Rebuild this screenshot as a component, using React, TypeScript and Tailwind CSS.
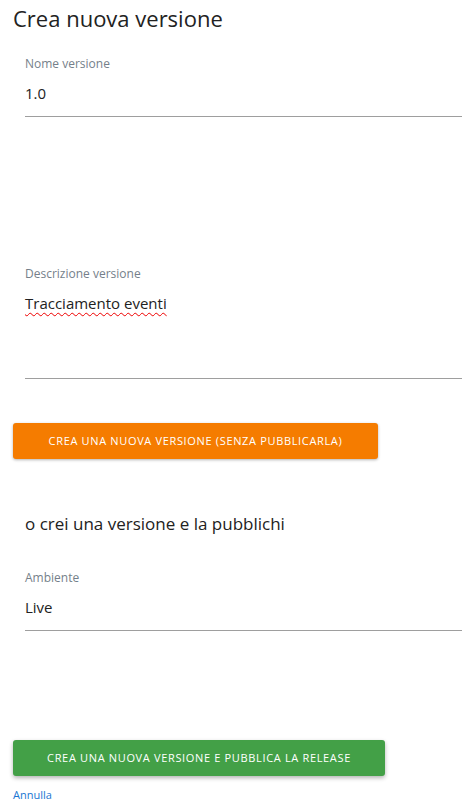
import React from "react";

function Field({ label, value, height, spell }: { label: string; value: string; height: string; spell?: boolean }) {
  return (
    <div className={`flex flex-col ml-[25px] border-b border-[#9e9e9e] ${height}`}>
      <div className="text-[12px] leading-[16px] text-[#757f8a]">{label}</div>
      <div
        className={`mt-[11px] text-[15px] leading-[20px] text-[#222] ${
          spell ? "underline decoration-wavy decoration-[#e00] decoration-1 underline-offset-[3px]" : ""
        }`}
      >
        {value}
      </div>
    </div>
  );
}

export default function App() {
  return (
    <div
      className="w-[462px] h-[801px] bg-white overflow-hidden"
      style={{ fontFamily: '"Open Sans", "Noto Sans", sans-serif' }}
    >
      <h1 className="pl-[13px] pt-[4px] text-[22px] leading-[28px] text-[#222]">Crea nuova versione</h1>
      <div className="mt-[24px]">
        <Field label="Nome versione" value="1.0" height="h-[61px]" />
      </div>
      <div className="mt-[149px]">
        <Field label="Descrizione versione" value="Tracciamento eventi" height="h-[113px]" spell />
      </div>
      <div className="pl-[13px] mt-[44px]">
        <button className="w-[365px] h-[36px] rounded-[3px] bg-[#f57c00] text-white text-[11px] tracking-[0.06em] shadow-[0_1px_3px_rgba(0,0,0,0.3)]">
          CREA UNA NUOVA VERSIONE (SENZA PUBBLICARLA)
        </button>
      </div>
      <div className="mt-[53px] pl-[25px] text-[17px] leading-[24px] text-[#222]">o crei una versione e la pubblichi</div>
      <div className="mt-[34px]">
        <Field label="Ambiente" value="Live" height="h-[61px]" />
      </div>
      <div className="pl-[13px] mt-[109px]">
        <button className="w-[372px] h-[36px] rounded-[3px] bg-[#43a047] text-white text-[11px] tracking-[0.06em] shadow-[0_2px_4px_rgba(0,0,0,0.3)]">
          CREA UNA NUOVA VERSIONE E PUBBLICA LA RELEASE
        </button>
      </div>
      <div className="pl-[13px] mt-[12px] text-[11px] leading-[14px] text-[#1976d2]">Annulla</div>
    </div>
  );
}
